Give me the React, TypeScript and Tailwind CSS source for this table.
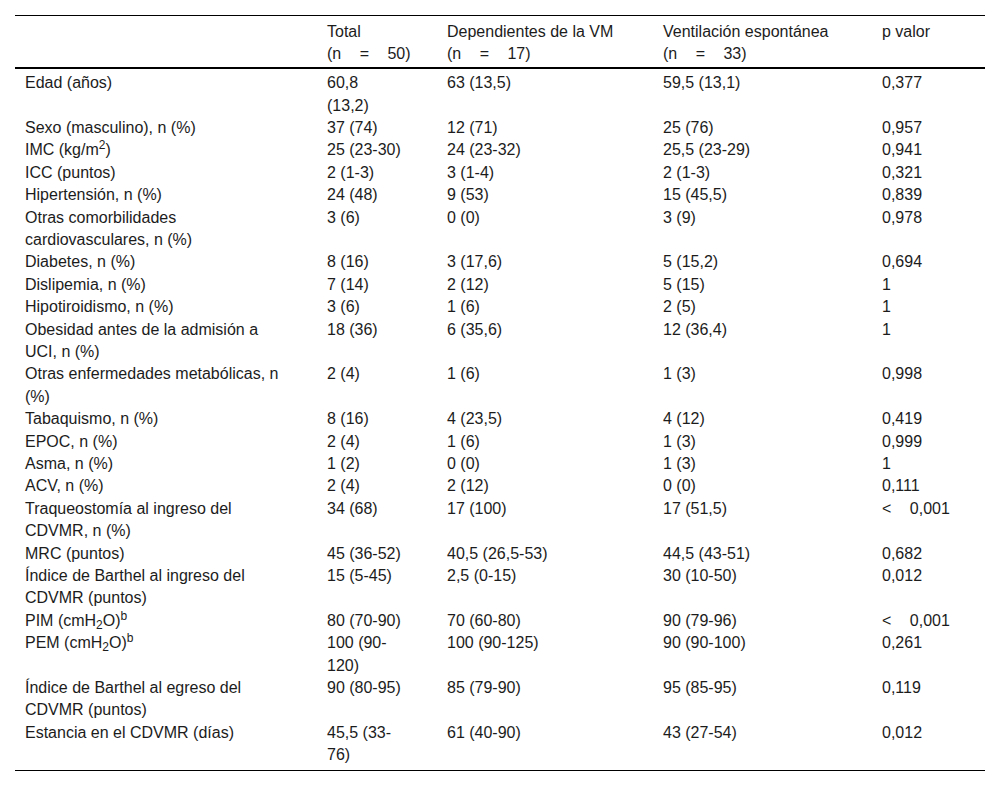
import type { ReactNode } from "react";

type Row = ReactNode[];

const wide = (text: string) => <span className="[word-spacing:14px]">{text}</span>;

const two = (a: ReactNode, b: ReactNode) => (
  <>
    {a}
    <br />
    {b}
  </>
);

const rows: Row[] = [
  ["Edad (años)", two("60,8", "(13,2)"), "63 (13,5)", "59,5 (13,1)", "0,377"],
  ["Sexo (masculino), n (%)", "37 (74)", "12 (71)", "25 (76)", "0,957"],
  [
    <>
      IMC (kg/m<sup>2</sup>)
    </>,
    "25 (23-30)",
    "24 (23-32)",
    "25,5 (23-29)",
    "0,941",
  ],
  ["ICC (puntos)", "2 (1-3)", "3 (1-4)", "2 (1-3)", "0,321"],
  ["Hipertensión, n (%)", "24 (48)", "9 (53)", "15 (45,5)", "0,839"],
  [two("Otras comorbilidades", "cardiovasculares, n (%)"), "3 (6)", "0 (0)", "3 (9)", "0,978"],
  ["Diabetes, n (%)", "8 (16)", "3 (17,6)", "5 (15,2)", "0,694"],
  ["Dislipemia, n (%)", "7 (14)", "2 (12)", "5 (15)", "1"],
  ["Hipotiroidismo, n (%)", "3 (6)", "1 (6)", "2 (5)", "1"],
  [two("Obesidad antes de la admisión a", "UCI, n (%)"), "18 (36)", "6 (35,6)", "12 (36,4)", "1"],
  [two("Otras enfermedades metabólicas, n", "(%)"), "2 (4)", "1 (6)", "1 (3)", "0,998"],
  ["Tabaquismo, n (%)", "8 (16)", "4 (23,5)", "4 (12)", "0,419"],
  ["EPOC, n (%)", "2 (4)", "1 (6)", "1 (3)", "0,999"],
  ["Asma, n (%)", "1 (2)", "0 (0)", "1 (3)", "1"],
  ["ACV, n (%)", "2 (4)", "2 (12)", "0 (0)", "0,111"],
  [two("Traqueostomía al ingreso del", "CDVMR, n (%)"), "34 (68)", "17 (100)", "17 (51,5)", wide("< 0,001")],
  ["MRC (puntos)", "45 (36-52)", "40,5 (26,5-53)", "44,5 (43-51)", "0,682"],
  [two("Índice de Barthel al ingreso del", "CDVMR (puntos)"), "15 (5-45)", "2,5 (0-15)", "30 (10-50)", "0,012"],
  [
    <>
      PIM (cmH<sub>2</sub>O)<sup>b</sup>
    </>,
    "80 (70-90)",
    "70 (60-80)",
    "90 (79-96)",
    wide("< 0,001"),
  ],
  [
    <>
      PEM (cmH<sub>2</sub>O)<sup>b</sup>
    </>,
    two("100 (90-", "120)"),
    "100 (90-125)",
    "90 (90-100)",
    "0,261",
  ],
  [two("Índice de Barthel al egreso del", "CDVMR (puntos)"), "90 (80-95)", "85 (79-90)", "95 (85-95)", "0,119"],
  ["Estancia en el CDVMR (días)", two("45,5 (33-", "76)"), "61 (40-90)", "43 (27-54)", "0,012"],
];

const headers: ReactNode[] = [
  "",
  two("Total", wide("(n = 50)")),
  two("Dependientes de la VM", wide("(n = 17)")),
  two("Ventilación espontánea", wide("(n = 33)")),
  "p valor",
];

export default function App() {
  return (
    <div className="min-h-[786px] bg-white px-[15px] pt-[15px] font-['Liberation_Sans',Arial,sans-serif] text-[16px] leading-[22.4px] text-[#1c1c1c]">
      <table className="w-[970px] table-fixed border-separate border-spacing-0">
        <colgroup>
          <col className="w-[302px]" />
          <col className="w-[120px]" />
          <col className="w-[216px]" />
          <col className="w-[219px]" />
          <col className="w-[113px]" />
        </colgroup>
        <thead>
          <tr>
            {headers.map((h, i) => (
              <th
                key={i}
                className="whitespace-nowrap border-t border-b-2 border-black pb-[1.3px] pl-[10px] pt-[5px] text-left align-top font-normal"
              >
                {h}
              </th>
            ))}
          </tr>
        </thead>
        <tbody>
          {rows.map((row, r) => {
            const first = r === 0;
            const last = r === rows.length - 1;
            return (
              <tr key={r}>
                {row.map((cell, c) => (
                  <td
                    key={c}
                    className={`whitespace-nowrap pl-[10px] align-top ${first ? "pt-[3px]" : ""} ${
                      last ? "border-b border-black pb-[3.5px]" : ""
                    }`}
                  >
                    {cell}
                  </td>
                ))}
              </tr>
            );
          })}
        </tbody>
      </table>
    </div>
  );
}
